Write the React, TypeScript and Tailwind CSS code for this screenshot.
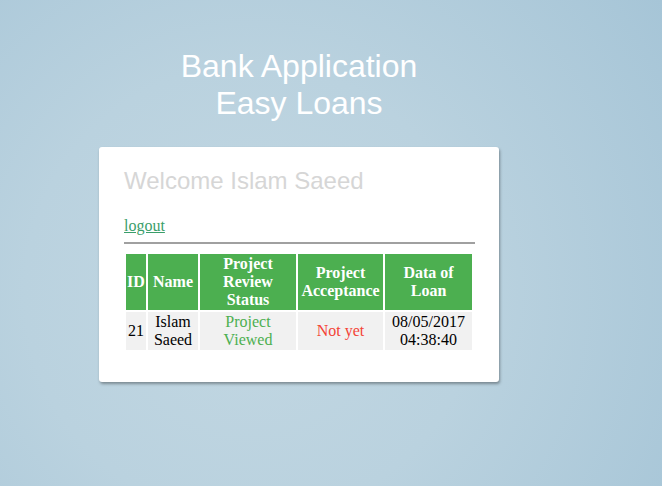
import React from "react";

export default function App() {
  return (
    <div className="h-[486px] w-full overflow-hidden bg-[radial-gradient(circle_at_38%_60%,#c2d7e2_0%,#bad2df_45%,#a6c5d7_100%)] pl-[99px] pt-[48px]">
      <div className="w-[400px]">
        <h1 className="text-center text-[32px] leading-[37px] text-white font-['Liberation_Sans',Arial,sans-serif]">
          Bank Application
          <br />
          Easy Loans
        </h1>
        <div className="mt-[25px] rounded-[3px] bg-white pl-[25px] pr-[24px] pt-[20px] pb-[30px] shadow-[1px_2px_3px_rgba(0,0,0,0.35)]">
          <h2 className="text-[24px] leading-[27.6px] text-[#d6d6d6] font-['Liberation_Sans',Arial,sans-serif]">
            Welcome Islam Saeed
          </h2>
          <div className="mt-[22px] font-['Liberation_Serif','Times_New_Roman',serif] text-[16px] leading-[18.4px]">
            <a href="#" className="text-[#3a9e6a] underline">
              logout
            </a>
          </div>
          <hr className="mt-[7px] border-0 border-t-2 border-[#a0a0a0]" />
          <table className="mt-[8px] w-[350px] table-fixed border-separate border-spacing-[2px] font-['Liberation_Serif','Times_New_Roman',serif] text-[16px] leading-[18px]">
            <thead>
              <tr className="bg-[#4caf50] text-white">
                <th className="w-[20px] p-px font-bold">ID</th>
                <th className="w-[50px] p-px font-bold">Name</th>
                <th className="w-[96px] p-px font-bold">Project Review Status</th>
                <th className="w-[85px] p-px font-bold">Project Acceptance</th>
                <th className="w-[87px] p-px font-bold">Data of Loan</th>
              </tr>
            </thead>
            <tbody>
              <tr className="bg-[#f1f1f1] text-center">
                <td className="p-px text-black">21</td>
                <td className="p-px text-black">Islam Saeed</td>
                <td className="p-px text-[#4caf50]">Project Viewed</td>
                <td className="p-px text-[#f44336]">Not yet</td>
                <td className="p-px text-black">08/05/2017 04:38:40</td>
              </tr>
            </tbody>
          </table>
        </div>
      </div>
    </div>
  );
}
